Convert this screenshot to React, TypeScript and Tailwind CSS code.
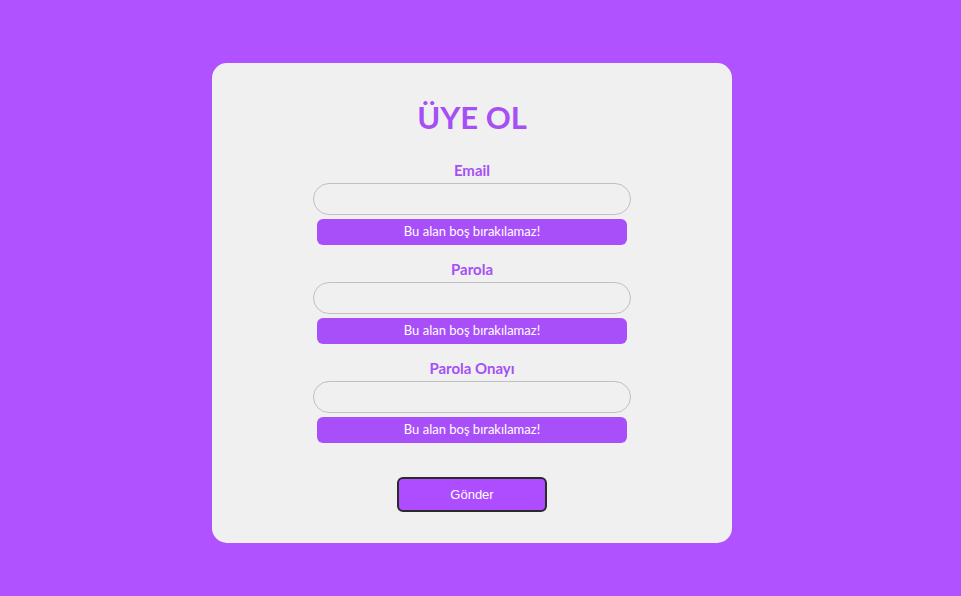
const fields = ['Email', 'Parola', 'Parola Onayı']

export default function App() {
  return (
    <div className="min-h-screen w-full bg-[#b052ff] flex justify-center pt-[63px] pr-[17px] font-['Lato','Open_Sans',sans-serif]">
      <div className="w-[520px] h-[480px] bg-[#f0f0f0] rounded-[15px] flex flex-col items-center pt-[36px]">
        <h1 className="text-[31px] leading-[36px] font-bold text-[#a64ff5]">ÜYE OL</h1>
        <form className="mt-[25px] flex flex-col items-center gap-[14px]">
          {fields.map((f) => (
            <div key={f} className="flex flex-col items-center">
              <label className="text-[15px] leading-[20px] font-bold text-[#a64ff5]">{f}</label>
              <input
                type={f === 'Email' ? 'email' : 'password'}
                className="mt-[3px] w-[318px] h-[32px] rounded-full border border-[#c0c0c0] bg-[#f0f0f0] outline-none px-4"
              />
              <div className="mt-[4px] w-[310px] h-[26px] rounded-[6px] bg-[#a94ffa] text-white text-[13px] flex items-center justify-center">
                Bu alan boş bırakılamaz!
              </div>
            </div>
          ))}
          <button
            type="button"
            className="mt-[20px] w-[150px] h-[35px] rounded-[6px] bg-[#ad4dff] border-2 border-[#2a2a2a] text-white text-[13px] font-['Liberation_Sans',Arial,sans-serif]"
          >
            Gönder
          </button>
        </form>
      </div>
    </div>
  )
}
